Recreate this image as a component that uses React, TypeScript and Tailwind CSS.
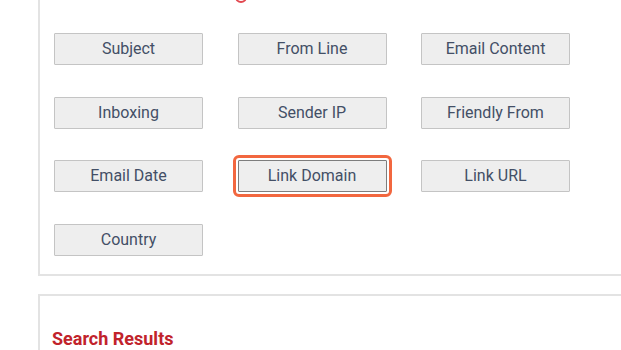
const fields = [
  'Subject',
  'From Line',
  'Email Content',
  'Inboxing',
  'Sender IP',
  'Friendly From',
  'Email Date',
  'Link Domain',
  'Link URL',
  'Country',
];

export default function App() {
  return (
    <main className="h-[350px] w-[621px] overflow-hidden bg-white font-['Roboto',sans-serif]">
      <div className="-mt-[30px] pl-[38px]">
        <section className="w-[640px] border-2 border-[#e3e3e3] pl-[14px] pt-[14px] pb-[18px]">
          <div className="flex h-[17px] items-end pl-[181px]">
            <span className="block h-[12px] w-[12px] rounded-full border-2 border-[#e2474f]" />
          </div>
          <div className="mt-[30px] grid grid-cols-[149px_149px_149px] gap-x-[34.5px] gap-y-[31.5px]">
            {fields.map((f) => {
              const active = f === 'Link Domain';
              return (
                <button
                  key={f}
                  className={
                    active
                      ? 'h-[32px] rounded-[1px] border border-[#7d7d7d] bg-[#eeeeee] text-[16px] text-[#434f66] outline-[3px] outline-offset-[2px] outline-[#f2673f] outline'
                      : 'h-[32px] rounded-[1px] border border-[#c4c4c4] bg-[#eeeeee] text-[16px] text-[#434f66]'
                  }
                >
                  {f}
                </button>
              );
            })}
          </div>
        </section>
        <section className="mt-[18px] h-[100px] w-[640px] border-2 border-[#e3e3e3] pl-[12px] pt-[29px]">
          <h2 className="text-[18px] font-bold text-[#c1232b]">Search Results</h2>
        </section>
      </div>
    </main>
  );
}
